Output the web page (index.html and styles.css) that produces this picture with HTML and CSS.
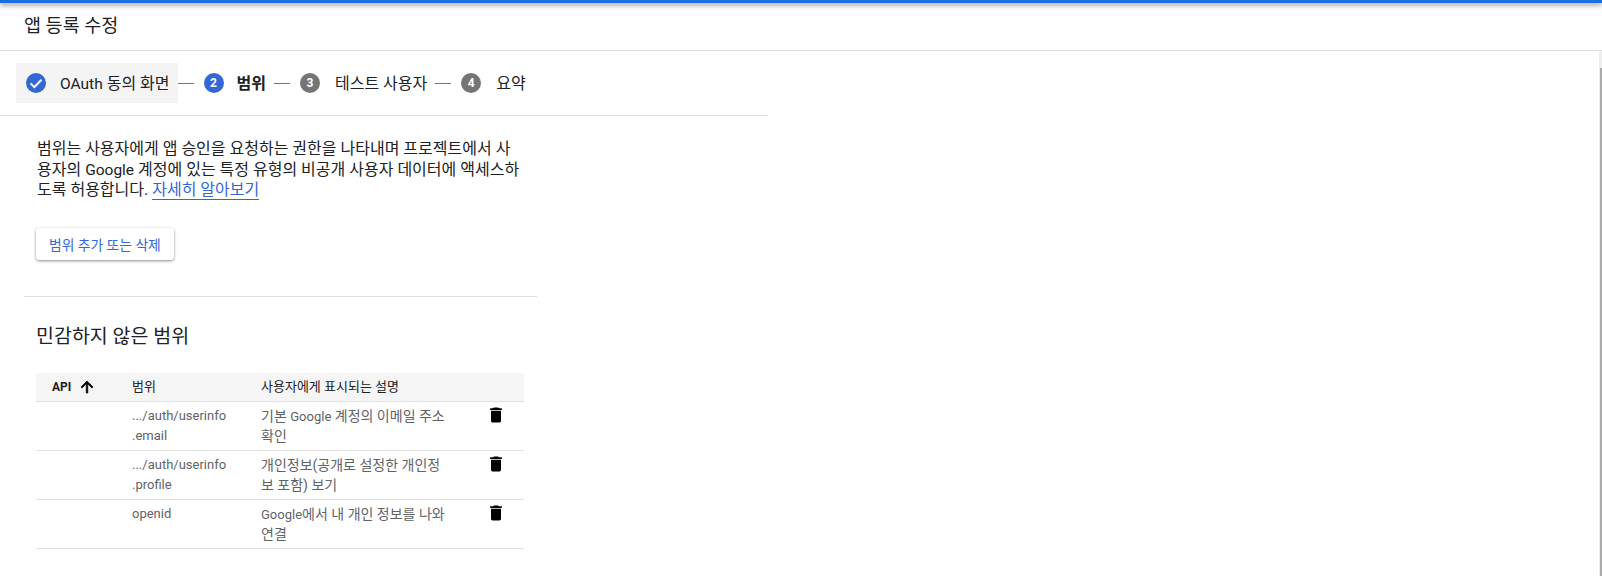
FILE: index.html
```html
<!DOCTYPE html>
<html lang="ko">
<head>
    <meta charset="UTF-8">
    <title>앱 등록 수정</title>
    <link rel="stylesheet" href="styles.css">
</head>
<body>
    <div class="top-bar"></div>

    <header class="page-header">
        <h1>앱 등록 수정</h1>
    </header>

    <div class="workspace">
        <main class="content">
            <div class="stepper">
                <div class="step step-done">
                    <svg class="step-check" viewBox="0 0 24 24" width="24" height="24">
                        <circle cx="12" cy="12" r="10" fill="#3367d6"/>
                        <path d="M6.6 12.4l3.7 3.7 7.2-7.4" fill="none" stroke="#fff" stroke-width="2"/>
                    </svg>
                    <span class="step-label"><span class="latin">OAuth</span> 동의 화면</span>
                </div>
                <span class="step-line"></span>
                <div class="step">
                    <span class="step-num step-num-active">2</span>
                    <span class="step-label step-label-active">범위</span>
                </div>
                <span class="step-line"></span>
                <div class="step">
                    <span class="step-num">3</span>
                    <span class="step-label">테스트 사용자</span>
                </div>
                <span class="step-line"></span>
                <div class="step">
                    <span class="step-num">4</span>
                    <span class="step-label">요약</span>
                </div>
            </div>

            <section class="intro">
                <p>범위는 사용자에게 앱 승인을 요청하는 권한을 나타내며 프로젝트에서 사용자의 <span class="latin">Google</span> 계정에 있는 특정 유형의 비공개 사용자 데이터에 액세스하도록 허용합니다. <a href="#">자세히 알아보기</a></p>
                <button class="btn-raised">범위 추가 또는 삭제</button>
            </section>

            <section class="scopes">
                <h2>민감하지 않은 범위</h2>
                <table class="scope-table">
                    <thead>
                        <tr>
                            <th class="col-api">
                                <span class="sort-head">API
                                    <svg viewBox="0 0 24 24" width="18" height="18"><path d="M4 12l1.41 1.41L11 7.83V20h2V7.83l5.58 5.59L20 12l-8-8z" stroke="#000" stroke-width="1"/></svg>
                                </span>
                            </th>
                            <th class="col-scope">범위</th>
                            <th class="col-desc">사용자에게 표시되는 설명</th>
                            <th class="col-action"></th>
                        </tr>
                    </thead>
                    <tbody>
                        <tr>
                            <td></td>
                            <td>.../auth/userinfo<br>.email</td>
                            <td class="desc-cell">기본 <span class="latin">Google</span> 계정의 이메일 주소 확인</td>
                            <td class="col-action"><svg class="trash" viewBox="0 0 24 24" width="20" height="20"><path d="M6 19c0 1.1.9 2 2 2h8c1.1 0 2-.9 2-2V7H6v12zM19 4h-3.5l-1-1h-5l-1 1H5v2h14V4z"/></svg></td>
                        </tr>
                        <tr>
                            <td></td>
                            <td>.../auth/userinfo<br>.profile</td>
                            <td class="desc-cell">개인정보(공개로 설정한 개인정보 포함) 보기</td>
                            <td class="col-action"><svg class="trash" viewBox="0 0 24 24" width="20" height="20"><path d="M6 19c0 1.1.9 2 2 2h8c1.1 0 2-.9 2-2V7H6v12zM19 4h-3.5l-1-1h-5l-1 1H5v2h14V4z"/></svg></td>
                        </tr>
                        <tr>
                            <td></td>
                            <td>openid</td>
                            <td class="desc-cell"><span class="latin">Google</span>에서 내 개인 정보를 나와 연결</td>
                            <td class="col-action"><svg class="trash" viewBox="0 0 24 24" width="20" height="20"><path d="M6 19c0 1.1.9 2 2 2h8c1.1 0 2-.9 2-2V7H6v12zM19 4h-3.5l-1-1h-5l-1 1H5v2h14V4z"/></svg></td>
                        </tr>
                    </tbody>
                </table>
            </section>
        </main>
        <div class="scrollbar"><div class="scrollbar-thumb"></div></div>
    </div>
</body>
</html>
```

FILE: styles.css
```css
html, body {
    height: 100%;
}

body {
    margin: 0;
    overflow: hidden;
    display: flex;
    flex-direction: column;
    background: #fff;
    color: #202124;
    font-family: Roboto, "Noto Sans CJK KR", sans-serif;
}

.latin {
    line-height: 1;
}

.top-bar {
    height: 3px;
    background: #1a6fdc;
    box-shadow: 0 2px 5px rgba(0, 0, 0, 0.5);
}

.page-header {
    height: 47px;
    padding-left: 24px;
    display: flex;
    align-items: center;
    border-bottom: 1px solid #dadce0;
}

.page-header h1 {
    margin: 0 0 5px;
    font-size: 18.5px;
    font-weight: 400;
}

.workspace {
    flex: 1;
    display: flex;
    justify-content: space-between;
    min-height: 0;
}

.content {
    width: 768px;
}

.stepper {
    width: 752px;
    height: 64px;
    padding-left: 16px;
    display: flex;
    align-items: center;
    border-bottom: 1px solid #e0e0e0;
    overflow: hidden;
    font-size: 16px;
}

.step {
    display: flex;
    align-items: center;
    flex-shrink: 0;
    padding: 0 8px 0 10px;
}

.step-done {
    height: 40px;
    padding: 0 8px;
    background: #f4f4f4;
}

.step-done .latin {
    font-size: 15.5px;
}

.step-check {
    margin-right: 12px;
}

.step-label {
    margin-bottom: 2px;
}

.step-num {
    width: 20px;
    height: 20px;
    margin-right: 15px;
    border-radius: 50%;
    background: #757575;
    color: #fff;
    font-size: 12px;
    font-weight: 700;
    line-height: 20px;
    text-align: center;
}

.step-num-active {
    margin-right: 13px;
    background: #3367d6;
}

.step-label-active {
    font-weight: 700;
}

.step-line {
    width: 16px;
    height: 1px;
    background: #757575;
    flex-shrink: 0;
}

.intro {
    width: 488px;
    padding: 23px 0 0 36px;
}

.intro p {
    margin: 0;
    padding-left: 1px;
    font-size: 16px;
    line-height: 20.5px;
}

.intro .latin {
    font-size: 15.5px;
}

.intro a {
    color: #3367d6;
    text-decoration: none;
    border-bottom: 1px solid #3367d6;
}

.btn-raised {
    display: block;
    height: 32px;
    margin-top: 27px;
    padding: 0 13px;
    border: 0;
    border-radius: 3px;
    background: #fff;
    color: #3367d6;
    font-family: inherit;
    font-size: 13.8px;
    box-shadow: 0 1px 3px rgba(0, 0, 0, 0.45);
}

.scopes {
    width: 513px;
    margin: 36px 0 0 24px;
    padding: 28px 0 0 12px;
    box-sizing: border-box;
    border-top: 1px solid #e0e0e0;
}

.scopes h2 {
    margin: 0 0 24px;
    font-size: 19.5px;
    font-weight: 400;
    line-height: 24px;
}

.scope-table {
    width: 488px;
    border-collapse: collapse;
    table-layout: fixed;
    font-size: 13px;
}

.scope-table th {
    height: 28px;
    padding: 0;
    background: #f5f5f5;
    border-bottom: 1px solid #e0e0e0;
    color: #202124;
    font-weight: 400;
    text-align: left;
}

.scope-table th.col-scope,
.scope-table th.col-desc {
    padding-bottom: 3px;
    height: 25px;
}

.scope-table td {
    height: 41px;
    padding: 4px 8px 3px 0;
    border-bottom: 1px solid #e0e0e0;
    color: #5f6368;
    line-height: 20px;
    vertical-align: top;
    word-break: break-all;
}

.scope-table td.desc-cell {
    padding-right: 36px;
    font-size: 14px;
}

.desc-cell .latin {
    font-size: 13px;
}

.col-api {
    width: 96px;
}

.col-scope {
    width: 129px;
}

.col-desc {
    width: 225px;
}

.sort-head {
    display: flex;
    align-items: center;
    gap: 7px;
    padding-left: 16px;
    font-size: 12px;
    font-weight: 700;
}

.scope-table td.col-action {
    padding-top: 3px;
    color: #000;
}

.scrollbar {
    width: 3px;
    padding-top: 17px;
    box-sizing: border-box;
    background: #eee;
}

.scrollbar-thumb {
    width: 2px;
    height: 100%;
    margin-left: 1px;
    background: #aaa;
}
```
